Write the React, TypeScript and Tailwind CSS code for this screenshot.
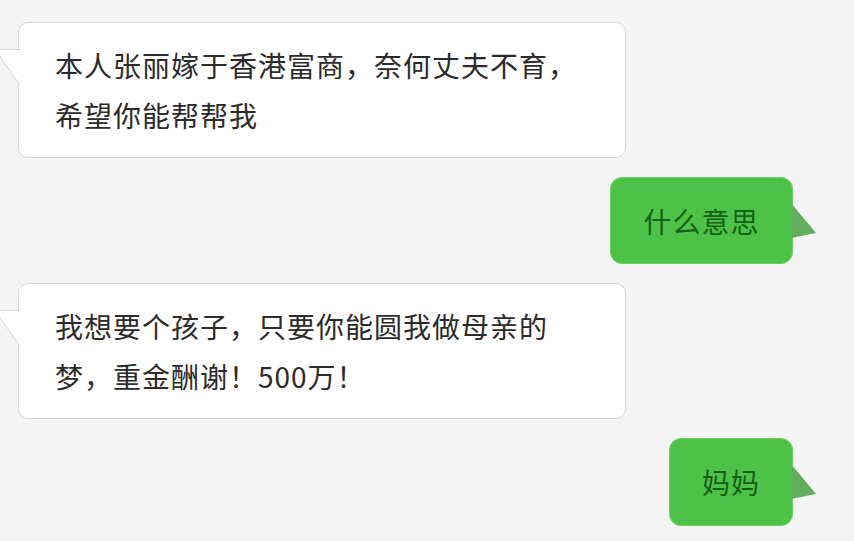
import React from "react";

const font = { fontFamily: '"Noto Sans CJK SC", "Noto Sans", sans-serif' };

function LeftBubble({ lines }: { lines: string[] }) {
  return (
    <div className="pl-[18px] flex">
      <div className="relative w-[608px] h-[136px] bg-white border border-[#d6d6d6] rounded-[10px] pl-[36px] py-[17px]">
        <svg
          className="absolute left-[-24px] top-[26px]"
          width="26"
          height="40"
          viewBox="0 0 26 40"
        >
          <polygon points="0,0 25,0 25,36" fill="#ffffff" />
          <polyline points="25,0.5 0,0.5 25,36" fill="none" stroke="#d6d6d6" strokeWidth="1" />
        </svg>
        <div className="text-[28px] leading-[50px] tracking-[1px] text-[#2b2b2b]">
          {lines.map((l, i) => (
            <div key={i}>{l}</div>
          ))}
        </div>
      </div>
    </div>
  );
}

function RightBubble({ text, w, h }: { text: string; w: string; h: string }) {
  return (
    <div className="flex justify-end pr-[61px]">
      <div
        className={`relative ${w} ${h} bg-[#4cc348] border border-[#66d45c] rounded-[12px] flex items-center justify-center`}
      >
        <svg
          className="absolute right-[-25px] top-[25px]"
          width="26"
          height="36"
          viewBox="0 0 26 36"
        >
          <polygon points="0,0 25,30 0,35" fill="#63ad5e" />
        </svg>
        <span className="text-[28px] tracking-[1px] text-[#165f16] leading-none">{text}</span>
      </div>
    </div>
  );
}

export default function App() {
  return (
    <div
      className="w-[854px] h-[541px] overflow-hidden bg-[#f4f4f4] flex flex-col pt-[22px] gap-[19px]"
      style={font}
    >
      <LeftBubble lines={["本人张丽嫁于香港富商，奈何丈夫不育，", "希望你能帮帮我"]} />
      <RightBubble text="什么意思" w="w-[183px]" h="h-[87px]" />
      <LeftBubble lines={["我想要个孩子，只要你能圆我做母亲的", "梦，重金酬谢！500万！"]} />
      <RightBubble text="妈妈" w="w-[124px]" h="h-[88px]" />
    </div>
  );
}
